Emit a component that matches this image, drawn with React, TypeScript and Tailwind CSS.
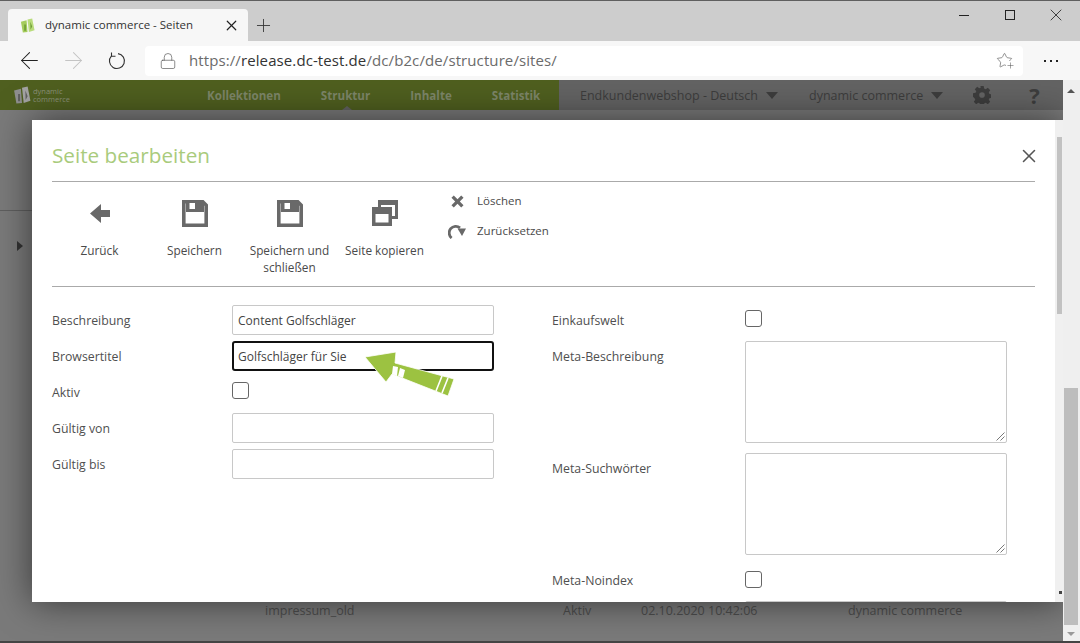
import { Lock, Plus, Star, X, ArrowLeft, ArrowRight } from 'lucide-react'

function Logo({ className, light }: { className?: string; light?: boolean }) {
  // small two-tone "dc" mark
  return (
    <svg viewBox="0 0 16 16" className={className}>
      <path d="M1 4 L7 2.5 L8 15 L3 15.5 Z" fill={light ? '#8f8f8f' : '#a5cc5c'} />
      <path d="M8 1.5 L13 0.5 L15.5 13 L9.5 15 Z" fill={light ? '#a3a3a3' : '#b9dc7c'} />
      <path d="M4.5 7 h1.8 v6.5 h-1.8 z M11 4 l2 5 l-1.8 3.5 z" fill={light ? '#5f5f5f' : '#6f9f35'} />
    </svg>
  )
}

function TabBar() {
  return (
    <div className="flex h-[41px] shrink-0 border-t border-[#5f5f5f] bg-[#cdcdcd] pl-2 pt-2">
      <div className="flex h-[32px] w-[240px] items-center rounded-t-[4px] bg-[#f7f7f7] pl-[12px] pr-[8px]">
        <Logo className="h-[15px] w-[15px]" />
        <span className="ml-[10px] flex-1 text-[11.5px] text-[#333]">dynamic commerce - Seiten</span>
        <X size={17} strokeWidth={1.7} className="text-[#222]" />
      </div>
      <div className="ml-[5px] flex h-[32px] items-center">
        <Plus size={21} strokeWidth={1} className="text-[#333]" />
      </div>
      <div className="-mt-[8px] ml-auto flex h-[28px] items-center pr-[1px] text-[#222]">
        <div className="flex w-[46px] justify-center">
          <span className="h-px w-[10px] bg-[#222]" />
        </div>
        <div className="flex w-[46px] justify-center">
          <span className="h-[10px] w-[10px] border border-[#222]" />
        </div>
        <div className="flex w-[46px] justify-center">
          <X size={20} strokeWidth={1} />
        </div>
      </div>
    </div>
  )
}

function AddressBar() {
  return (
    <div className="flex h-[39px] shrink-0 items-center bg-[#f7f7f7] pl-[7px]">
      <div className="flex w-[44px] justify-center">
        <ArrowLeft size={27} strokeWidth={0.9} className="text-[#222]" />
      </div>
      <div className="flex w-[44px] justify-center">
        <ArrowRight size={27} strokeWidth={0.9} className="text-[#c4c4c4]" />
      </div>
      <div className="flex w-[44px] justify-center">
        <svg viewBox="0 0 18 18" className="h-[18px] w-[18px]" fill="none" stroke="#333" strokeWidth="1.1">
          <path d="M10 1.6 A7.5 7.5 0 1 1 3.5 3.9" />
          <path d="M3.5 0.5 V4.2 H7.5" />
        </svg>
      </div>
      <div className="ml-[6px] flex h-[30px] w-[878px] items-center rounded-[4px] bg-white pl-[14px] pr-[10px]">
        <Lock size={18} strokeWidth={0.9} className="text-[#555]" />
        <span className="ml-[12px] flex-1 text-[15px] tracking-[0.1px] text-[#6b6b6b]">
          https://<span className="text-[#333]">release.dc-test.de</span>/dc/b2c/de/structure/sites/
        </span>
        <div className="relative">
          <Star size={17} strokeWidth={0.9} className="text-[#555]" />
          <Plus size={9} strokeWidth={1.4} className="absolute -bottom-[1px] -right-[2px] bg-white text-[#555]" />
        </div>
      </div>
      <div className="ml-[21px] flex gap-[4px]">
        <span className="h-[2px] w-[2px] bg-[#222]" />
        <span className="h-[2px] w-[2px] bg-[#222]" />
        <span className="h-[2px] w-[2px] bg-[#222]" />
      </div>
    </div>
  )
}

function NavBar() {
  const caret = 'h-0 w-0 border-x-[6px] border-t-[7px] border-x-transparent border-t-[#3d3d3d]'
  return (
    <div className="relative flex h-[30px] items-center bg-[#4f5f1f] text-[#7d8669]">
      <div className="flex w-[559px] items-center pt-[2px] text-[11.6px] font-bold">
        <div className="-mt-[2px] flex w-[207px] items-center pl-[13px]">
          <Logo light className="h-[18px] w-[18px]" />
          <span className="ml-[2px] text-[7.5px] font-normal leading-[8px] text-[#8a9078]">dynamic<br />commerce</span>
        </div>
        <span>Kollektionen</span>
        <span className="ml-[40px]">Struktur</span>
        <span className="ml-[40px]">Inhalte</span>
        <span className="ml-[40px]">Statistik</span>
      </div>
      <div className="flex h-full flex-1 items-center bg-[#636363] pl-[21px] text-[12.5px] text-[#3d3d3d]">
        <span className="pt-[2px]">Endkundenwebshop - Deutsch</span>
        <span className={`ml-[8px] ${caret}`} />
        <span className="ml-[31px] pt-[2px]">dynamic commerce</span>
        <span className={`ml-[8px] ${caret}`} />
        <svg viewBox="0 0 16 16" className="ml-[30px] h-[18px] w-[18px]" fill="#3d3d3d">
          <path d="M6.5 0h3l.4 2.3 1.4.6 1.9-1.3 2.1 2.1-1.3 1.9.6 1.4 2.3.4v3l-2.3.4-.6 1.4 1.3 1.9-2.1 2.1-1.9-1.3-1.4.6-.4 2.3h-3l-.4-2.3-1.4-.6-1.9 1.3-2.1-2.1 1.3-1.9-.6-1.4L0 9.5v-3l2.3-.4.6-1.4L1.6 2.8l2.1-2.1 1.9 1.3 1.4-.6zM8 5.5a2.5 2.5 0 1 0 0 5 2.5 2.5 0 0 0 0-5z" />
        </svg>
        <span className="ml-[38px] text-[22px] font-bold leading-[28px]">?</span>
      </div>
      <span className="absolute bottom-0 left-[342px] h-0 w-0 border-x-[5px] border-b-[4px] border-x-transparent border-b-[#636363]" />
    </div>
  )
}

function ToolButton({ label, icon }: { label: React.ReactNode; icon: React.ReactNode }) {
  return (
    <div className="flex w-[95px] flex-col items-center text-center">
      <div className="flex h-[32px] items-center">{icon}</div>
      <div className="mt-[13px] text-[11.8px] leading-[17px] text-[#4a4a4a]">{label}</div>
    </div>
  )
}

function SaveIcon() {
  return (
    <svg viewBox="0 0 26 27" className="h-[27px] w-[26px]">
      <path d="M1.8 1.8h19l3.4 3.4v20h-22.4z" fill="none" stroke="#696969" strokeWidth="3.6" />
      <path d="M4 1h18v11h-18z" fill="#696969" />
      <path d="M7.5 3h5.5v6h-5.5z" fill="#fff" />
    </svg>
  )
}

function Field({ label, value, active }: { label: string; value?: string; active?: boolean }) {
  return (
    <div className="flex h-[36px] items-center">
      <span className="w-[180px] pt-[2px] text-[12.3px] text-[#4f4f4f]">{label}</span>
      <div
        className={`flex h-[30px] w-[262px] items-center pt-[2px] text-[12px] text-[#444] ${
          active ? 'rounded-[3px] border-2 border-[#111] px-[4px]' : 'rounded-[2px] border border-[#c8c8c8] px-[5px]'
        }`}
      >
        {value}
      </div>
    </div>
  )
}

function CheckRow({ label, labelWidth, boxClass }: { label: string; labelWidth: string; boxClass: string }) {
  return (
    <div className="flex h-[36px] items-center">
      <span className={`${labelWidth} pt-[2px] text-[12.3px] text-[#4f4f4f]`}>{label}</span>
      <span className={`h-[17px] w-[17px] rounded-[3px] border border-[#666] bg-white ${boxClass}`} />
    </div>
  )
}

function Area({ label }: { label: string }) {
  return (
    <div className="mb-[10px] flex">
      <span className="mt-[7px] w-[193px] text-[12.3px] text-[#4f4f4f]">{label}</span>
      <div className="relative h-[102px] w-[262px] rounded-[2px] border border-[#c8c8c8]">
        <svg viewBox="0 0 9 9" className="absolute bottom-[1px] right-[1px] h-[9px] w-[9px]" stroke="#555" strokeWidth="0.8">
          <path d="M0.5 8.5 L8.5 0.5 M4.5 8.5 L8.5 4.5" />
        </svg>
      </div>
    </div>
  )
}

function Modal() {
  return (
    <div className="absolute left-[32px] top-[40px] flex h-[482px] w-[1031px] overflow-hidden bg-white shadow-[0_0_34px_rgba(0,0,0,0.55)]">
      <div className="w-[1003px] shrink-0 pl-[20px]">
        <div className="flex h-[62px] items-center justify-between border-b border-[#aaa] pt-[11px]">
          <span className="text-[20.7px] text-[#a9cb7c]">Seite bearbeiten</span>
          <X size={22} strokeWidth={1.7} className="-mr-[5px] -mt-[1px] text-[#555]" />
        </div>
        <div className="flex h-[105px] border-b border-[#aaa] pt-[15px]">
          <ToolButton
            label="Zurück"
            icon={
              <svg viewBox="0 0 20 19" className="h-[19px] w-[20px]">
                <path d="M0 9.5 L11 0 V6 H20 V13 H11 V19 Z" fill="#696969" />
              </svg>
            }
          />
          <ToolButton label="Speichern" icon={<SaveIcon />} />
          <ToolButton label={<>Speichern und<br />schließen</>} icon={<SaveIcon />} />
          <ToolButton
            label="Seite kopieren"
            icon={
              <svg viewBox="0 0 26 26" className="h-[26px] w-[26px]">
                <path d="M6 0h20v19h-6v7h-20v-19h6z" fill="#696969" />
                <path d="M3.5 14h13v8.5h-13z M9 5h14v11h-3v-9h-11z" fill="#fff" />
              </svg>
            }
          />
          <div className="ml-[10px] -mt-[11px] flex flex-col text-[11.5px] text-[#4a4a4a]">
            <div className="flex h-[30px] items-center">
              <svg viewBox="0 0 14 14" className="ml-[9px] h-[13px] w-[13px]" fill="#696969">
                <path d="M3 0.5 L7 4.5 L11 0.5 L13.5 3 L9.5 7 L13.5 11 L11 13.5 L7 9.5 L3 13.5 L0.5 11 L4.5 7 L0.5 3 Z" />
              </svg>
              <span className="ml-[13px]">Löschen</span>
            </div>
            <div className="flex h-[30px] items-center">
              <svg viewBox="0 0 18 15" className="ml-[6px] h-[15px] w-[18px]" fill="none">
                <path d="M3.6 14 A6.2 6.2 0 0 1 12 3.8" stroke="#696969" strokeWidth="2.8" />
                <path d="M9.5 4.5 L18 4.5 L14 12 Z" fill="#696969" />
              </svg>
              <span className="ml-[11px]">Zurücksetzen</span>
            </div>
          </div>
        </div>
        <div className="flex pt-[15px]">
          <div className="w-[500px]">
            <Field label="Beschreibung" value="Content Golfschläger" />
            <Field label="Browsertitel" value="Golfschläger für Sie" active />
            <CheckRow label="Aktiv" labelWidth="w-[180px]" boxClass="mb-[3px]" />
            <Field label="Gültig von" />
            <Field label="Gültig bis" />
          </div>
          <div className="flex-1">
            <div className="mb-[3px]">
              <CheckRow label="Einkaufswelt" labelWidth="w-[193px]" boxClass="mb-[4px]" />
            </div>
            <Area label="Meta-Beschreibung" />
            <Area label="Meta-Suchwörter" />
            <div className="-mt-[3px]">
              <CheckRow label="Meta-Noindex" labelWidth="w-[193px]" boxClass="mb-[2px]" />
            </div>
            <div className="ml-[193px] mt-[3px] h-[30px] w-[262px] rounded-[2px] border border-[#c8c8c8]" />
          </div>
        </div>
      </div>
      <div className="relative flex-1">
        <div className="absolute bottom-0 right-0 top-0 w-[8px] bg-[#f0f0f0]">
          <div className="absolute left-[2px] top-[17px] h-[177px] w-[5px] bg-[#c2c2c2]" />
          <div className="absolute bottom-[8px] left-[4px] h-[3px] w-[3px] bg-[#444]" />
        </div>
      </div>
      <svg viewBox="0 0 100 52" className="absolute left-[328px] top-[228px] h-[52px] w-[100px]">
        <path d="M5 9 L36 4 L35 15 L94 31 L88 48 L32 26 L26 34 Z" fill="#9cc241" stroke="#fff" strokeWidth="0.8" />
        <path d="M82 28 L76 43 M88 30 L82 45" stroke="#fff" strokeWidth="1.6" />
        <path d="M33 18 L38 19 L37 28 L32 26 Z M40 20 L45 22 L43 30 L38 28 Z" fill="#fff" />
      </svg>
    </div>
  )
}

export default function App() {
  return (
    <div className="flex h-[643px] w-[1080px] flex-col overflow-hidden bg-[#7a7a7a] font-['Open_Sans',sans-serif]">
      <TabBar />
      <AddressBar />
      <div className="relative flex flex-1">
        <div className="relative flex-1 overflow-hidden">
          <NavBar />
          <div className="h-[101px] border-b border-[#5f5f5f]" />
          <div className="ml-[17px] mt-[30px] h-0 w-0 border-y-[5px] border-l-[6px] border-y-transparent border-l-[#333]" />
          <div className="absolute left-[265px] top-[522px] flex text-[12.5px] text-[#4d4d4d]">
            <span className="w-[298px]">impressum_old</span>
            <span className="w-[78px]">Aktiv</span>
            <span className="w-[207px]">02.10.2020 10:42:06</span>
            <span>dynamic commerce</span>
          </div>
          <Modal />
        </div>
        <div className="relative w-[17px] bg-[#efefef]">
          <div className="mt-[9px] h-0 w-0 translate-x-[4px] border-x-[4px] border-b-[4px] border-x-transparent border-b-[#555]" />
          <div className="absolute left-[1px] top-[308px] h-[237px] w-[14px] bg-[#bdbdbd]" />
          <div className="absolute bottom-[5px] left-[4px] h-0 w-0 border-x-[4px] border-t-[4px] border-x-transparent border-t-[#999]" />
        </div>
      </div>
      <div className="h-[2px] shrink-0 bg-[#444]" />
    </div>
  )
}
